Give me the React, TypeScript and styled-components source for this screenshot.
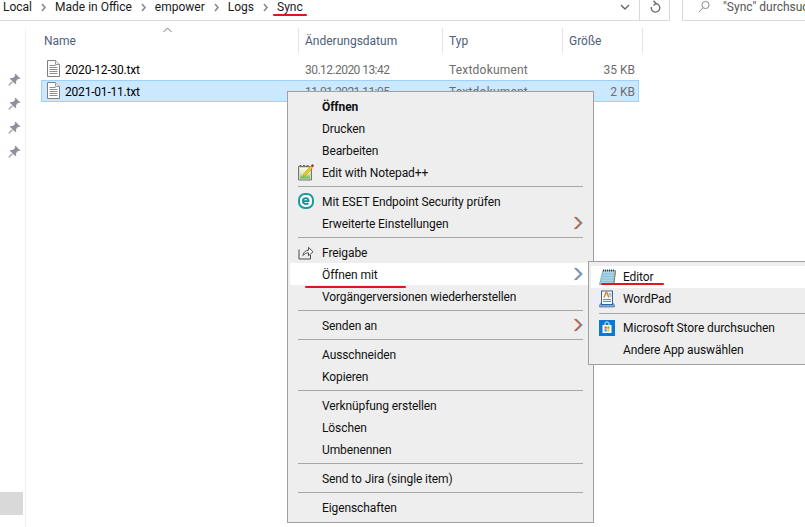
import React from "react";
import styled, { createGlobalStyle } from "styled-components";

const Global = createGlobalStyle`
  html, body { margin: 0; padding: 0; background: #fff; }
  body { font-family: Roboto, "Noto Sans", sans-serif; font-size: 12px; color: #000; }
  #root { width: 805px; height: 527px; }
`;

const Page = styled.div`
  position: relative;
  width: 805px;
  height: 527px;
  overflow: hidden;
  display: flex;
  flex-direction: column;
  background: #fff;
`;

const TopBar = styled.header`
  height: 21px;
  flex: none;
  display: flex;
  gap: 12px;
`;

const AddressBox = styled.div`
  width: 670px;
  flex: none;
  display: flex;
  align-items: flex-start;
  border-right: 1px solid #d9d9d9;
  border-bottom: 1px solid #d9d9d9;
  box-sizing: border-box;
  padding-left: 3px;
`;

const Crumbs = styled.div`
  display: flex;
  align-items: center;
  height: 14px;
`;

const Crumb = styled.span`
  position: relative;
  line-height: 14px;
  white-space: nowrap;
  color: #1a1a1a;
`;

const CrumbSep = styled.span`
  width: 23px;
  height: 14px;
  display: flex;
  align-items: center;
  justify-content: center;
`;

const AddressTools = styled.div`
  margin-left: auto;
  display: flex;
  height: 100%;
`;

const DropCell = styled.div`
  width: 29px;
  display: flex;
  justify-content: center;
  padding-top: 4px;
  box-sizing: border-box;
  border-right: 1px solid #d9d9d9;
`;

const RefreshCell = styled.div`
  width: 29px;
  display: flex;
  justify-content: center;
`;

const SearchBox = styled.div`
  flex: 1;
  min-width: 0;
  display: flex;
  align-items: flex-start;
  border-left: 1px solid #d9d9d9;
  border-bottom: 1px solid #d9d9d9;
  padding-left: 15px;
  gap: 13px;
  white-space: nowrap;
  color: #555;
  line-height: 14px;
  & > svg { flex: none; }
`;

const Body = styled.main`
  flex: 1;
  display: flex;
  min-height: 0;
  padding-top: 7px;
`;

const Side = styled.aside`
  width: 26px;
  flex: none;
  box-sizing: border-box;
  border-right: 1px solid #f1f1f1;
  display: flex;
  flex-direction: column;
  align-items: center;
  padding-top: 39px;
  padding-left: 4px;
`;

const PinSlot = styled.div`
  height: 24px;
  width: 16px;
  display: flex;
  align-items: center;
  justify-content: center;
`;

const ScrollThumb = styled.div`
  margin-top: auto;
  margin-bottom: 12px;
  margin-left: -4px;
  width: 23px;
  height: 23px;
  align-self: flex-start;
  background: #d9d9d9;
`;

const ListArea = styled.section`
  flex: 1;
  padding-left: 15px;
`;

const HeaderRow = styled.div`
  position: relative;
  display: grid;
  grid-template-columns: 258px 144px 120px 80px;
  height: 25px;
  margin-bottom: 5px;
`;

const HeaderCell = styled.div`
  display: flex;
  align-items: center;
  padding-left: 3px;
  border-right: 1px solid #e5e5e5;
  color: #4c607a;
  white-space: nowrap;
  & + & { padding-left: 6px; }
`;

const SortCaret = styled.span`
  position: absolute;
  left: 122px;
  top: -1px;
  line-height: 0;
`;

const FileRow = styled.div<{ $selected?: boolean }>`
  display: grid;
  grid-template-columns: 257px 144px 120px 72px;
  width: 598px;
  height: 22px;
  box-sizing: border-box;
  align-items: center;
  border: 1px solid ${(p) => (p.$selected ? "#99d1ff" : "transparent")};
  background: ${(p) => (p.$selected ? "#cce8ff" : "transparent")};
  white-space: nowrap;
`;

const NameCell = styled.div`
  display: flex;
  align-items: center;
  gap: 5px;
  padding-left: 5px;
  color: #000;
  letter-spacing: -0.2px;
`;

const IconWrap = styled.span`
  display: flex;
  margin-top: -2px;
`;

const MetaCell = styled.div<{ $right?: boolean; $spacing: number }>`
  color: #6d6d6d;
  padding-top: 2px;
  padding-left: ${(p) => (p.$right ? 0 : "6px")};
  text-align: ${(p) => (p.$right ? "right" : "left")};
  letter-spacing: ${(p) => p.$spacing}px;
`;

const FileName = styled.span`
  padding-top: 2px;
`;

const Menu = styled.div`
  position: absolute;
  left: 287px;
  top: 91px;
  width: 307px;
  box-sizing: border-box;
  border: 1px solid #a0a0a0;
  background: #eeeeee;
  padding: 3px 2px 4px;
`;

const SubMenu = styled(Menu)`
  left: 588px;
  top: 261px;
  width: 300px;
  padding: 4px 2px 3px;
`;

const Item = styled.div<{ $active?: boolean; $bold?: boolean }>`
  position: relative;
  height: 22px;
  display: flex;
  align-items: center;
  white-space: nowrap;
  background: ${(p) => (p.$active ? "#fff" : "transparent")};
  font-weight: ${(p) => (p.$bold ? 700 : 400)};
  color: #111;
`;

const Label = styled.span<{ $drop: number }>`
  padding-top: ${(p) => p.$drop}px;
  letter-spacing: -0.1px;
`;

const IconSlot = styled.span`
  width: 32px;
  height: 22px;
  flex: none;
  display: flex;
  align-items: center;
  justify-content: center;
`;

const Arrow = styled.span`
  margin-left: auto;
  margin-right: 8px;
  line-height: 0;
`;

const Divider = styled.div<{ $indent: number; $right: number }>`
  height: 1px;
  margin: 3px ${(p) => p.$right}px 3px ${(p) => p.$indent}px;
  background: #a6a6a6;
`;

const RedMark = styled.span<{ $left: number; $top: number; $w: number }>`
  position: absolute;
  left: ${(p) => p.$left}px;
  top: ${(p) => p.$top}px;
  width: ${(p) => p.$w}px;
  height: 2px;
  border-radius: 1px;
  background: #e3141c;
`;

const Chev = () => (
  <svg width="7" height="9" viewBox="0 0 7 9">
    <path d="M2 1l3 3.500L2 8" fill="none" stroke="#8a8a8a" strokeWidth="1.600" />
  </svg>
);

const Pin = () => (
  <svg width="13" height="13" viewBox="0 0 12 12">
    <path d="M7 0.600L11.400 5 10.400 5.800 9.200 5.400 7.400 7.600 7.600 9.600 6.600 10.200 1.800 5.400 2.400 4.600 4.400 4.600 6.600 2.800 6.200 1.400z" fill="#8b9299" />
    <path d="M4 8L0.600 11.400" stroke="#9aa0a6" strokeWidth="1.200" />
  </svg>
);

const TxtIcon = () => (
  <svg width="13" height="17" viewBox="0 0 13 17">
    <path d="M.5.500h8l4 4v12h-12z" fill="#fff" stroke="#7f7f7f" />
    <path d="M8.500.500v4h4" fill="#eee" stroke="#9a9a9a" />
    <path d="M2.500 5.500h6M2.500 7.500h8M2.500 9.500h8M2.500 11.500h8M2.500 13.500h8" stroke="#8f8f8f" />
  </svg>
);

const MenuArrow = ({ dark }: { dark?: boolean }) => (
  <svg width="9" height="14" viewBox="0 0 9 14">
    <path d="M0.500 1l6 6-6 6" fill="none" stroke={dark ? "#b09a8c" : "#e8641c"} strokeWidth="1.100" />
    <path d="M2.300 1l6 6-6 6" fill="none" stroke="#2f8fe0" strokeWidth=".9" />
    <path d="M1.400 1l6 6-6 6" fill="none" stroke={dark ? "#2c4a80" : "#6a2c2c"} strokeWidth=".6" />
  </svg>
);

const NotepadPP = () => (
  <svg width="17" height="18" viewBox="0 0 17 18">
    <defs>
      <linearGradient id="nppPaper" x1="0" y1="0" x2="0" y2="1">
        <stop offset="0" stopColor="#fbfbf2" />
        <stop offset=".55" stopColor="#dcebb8" />
        <stop offset="1" stopColor="#5fb548" />
      </linearGradient>
    </defs>
    <path d="M0.500 3.500h13v13.500h-13z" fill="#d8d8d0" stroke="#77776d" />
    <path d="M2 5h10v10.500h-10z" fill="url(#nppPaper)" />
    <path d="M1.500 2.500h2M5 2.500h2M8.500 2.500h2" stroke="#6d6d62" />
    <path d="M5 14l1-3.500 6.500-7.500 2 1.700-6.500 7.500z" fill="#f0c81e" stroke="#a08a1e" strokeWidth=".5" />
    <path d="M13 2.600l1.300-1.500 1.800 1.600-1.300 1.600z" fill="#9e2a2e" />
  </svg>
);

const Eset = () => (
  <svg width="16" height="16" viewBox="0 0 16 16">
    <rect x="1" y="1" width="14" height="14" rx="6" fill="#fff" stroke="#1a9aa3" strokeWidth="2" />
    <path d="M5 8.200h5.600c0-2-1.100-3-2.700-3-1.800 0-3 1.200-3 2.900s1.200 2.900 3 2.900c1.100 0 1.900-.3 2.500-.8" fill="none" stroke="#1a8f98" strokeWidth="1.800" />
  </svg>
);

const ShareIcon = () => (
  <svg width="16" height="15" viewBox="0 0 16 15">
    <path d="M1 4.500v9.500h11.500v-4" fill="none" stroke="#4a4a4a" />
    <path d="M5 10.500c.3-3.500 2.800-5.200 5.500-5.200v-3l4.500 4.500-4.500 4v-3c-2.200 0-4 .8-5.500 2.700z" fill="#fff" stroke="#4a4a4a" />
  </svg>
);

const NotepadIcon = () => (
  <svg width="17" height="18" viewBox="0 0 17 18">
    <path d="M4 2.500h12.500l-2 14h-14z" fill="#a9d6e8" stroke="#5f9fc0" strokeWidth=".8" />
    <path d="M3.500 6h12M3 8.500h12M2.600 11h12M2.200 13.500h12" stroke="#7fbbd6" strokeWidth=".8" />
    <path d="M4.500 1.500v2M6.500 1.500v2M8.500 1.500v2M10.500 1.500v2M12.500 1.500v2M14.500 1.500v2" stroke="#3b3b3b" />
    <path d="M16.500 3l-1.800 14" stroke="#9b7b3f" />
  </svg>
);

const WordPadIcon = () => (
  <svg width="16" height="18" viewBox="0 0 16 18">
    <path d="M0.500 15.500l1-2h13l1 2v1.500h-15z" fill="#7ea6d6" stroke="#35649c" strokeWidth=".6" />
    <rect x="2.500" y="1" width="11" height="13.500" fill="#f5f8fc" stroke="#35649c" />
    <path d="M5 7.500l2-5h.8l2 5" fill="none" stroke="#e87a1d" strokeWidth="1.300" />
    <path d="M4 9.500h8M4 11.500h8M9.500 4h3M10.500 6h2" stroke="#5e8ac0" />
  </svg>
);

const StoreIcon = () => (
  <svg width="16" height="16" viewBox="0 0 16 16">
    <rect width="16" height="16" fill="#0a78d4" />
    <path d="M3.500 5h9v8h-9z" fill="#fff" />
    <path d="M6 5V3.500C6 2.600 6.800 2 8 2s2 .6 2 1.500V5" fill="none" stroke="#fff" />
    <rect x="5.500" y="6.500" width="2.200" height="2.200" fill="#f25022" />
    <rect x="8.300" y="6.500" width="2.200" height="2.200" fill="#7fba00" />
    <rect x="5.500" y="9.300" width="2.200" height="2.200" fill="#00a4ef" />
    <rect x="8.300" y="9.300" width="2.200" height="2.200" fill="#ffb900" />
  </svg>
);

const crumbs = ["Local", "Made in Office", "empower", "Logs"];

const mainItems = [
  [{ t: "Öffnen", bold: true }, { t: "Drucken" }, { t: "Bearbeiten" }, { t: "Edit with Notepad++", icon: <NotepadPP /> }],
  [{ t: "Mit ESET Endpoint Security prüfen", icon: <Eset /> }, { t: "Erweiterte Einstellungen", arrow: true }],
  [
    { t: "Freigabe", icon: <ShareIcon /> },
    { t: "Öffnen mit", active: true, arrow: true, dark: true, mark: true },
    { t: "Vorgängerversionen wiederherstellen" },
  ],
  [{ t: "Senden an", arrow: true }],
  [{ t: "Ausschneiden" }, { t: "Kopieren" }],
  [{ t: "Verknüpfung erstellen" }, { t: "Löschen" }, { t: "Umbenennen" }],
  [{ t: "Send to Jira (single item)" }],
  [{ t: "Eigenschaften" }],
] as { t: string; bold?: boolean; icon?: React.ReactNode; arrow?: boolean; active?: boolean; dark?: boolean; mark?: boolean }[][];

const subItems = [
  [
    { t: "Editor", icon: <NotepadIcon />, active: true },
    { t: "WordPad", icon: <WordPadIcon /> },
  ],
  [{ t: "Microsoft Store durchsuchen", icon: <StoreIcon /> }, { t: "Andere App auswählen" }],
];

const files = [
  { name: "2020-12-30.txt", date: "30.12.2020 13:42", size: "35 KB" },
  { name: "2021-01-11.txt", date: "11.01.2021 11:05", size: "2 KB", selected: true },
];

export default function App() {
  return (
    <Page>
      <Global />
      <TopBar>
        <AddressBox>
          <Crumbs>
            {crumbs.map((c) => (
              <React.Fragment key={c}>
                <Crumb>{c}</Crumb>
                <CrumbSep><Chev /></CrumbSep>
              </React.Fragment>
            ))}
            <Crumb>
              Sync
              <RedMark $left={-4} $top={14} $w={34} />
            </Crumb>
          </Crumbs>
          <AddressTools>
            <DropCell>
              <svg width="10" height="6" viewBox="0 0 10 6"><path d="M1 1l4 4 4-4" fill="none" stroke="#666" strokeWidth="1.400" /></svg>
            </DropCell>
            <RefreshCell>
              <svg width="12" height="14" viewBox="0 0 12 14"><path d="M6.500 3.500a4.300 4.300 0 1 1-4.200 3.500M4.500 0.800l2.500 2.700-2.500 2" fill="none" stroke="#666" strokeWidth="1.300" /></svg>
            </RefreshCell>
          </AddressTools>
        </AddressBox>
        <SearchBox>
          <svg width="12" height="13" viewBox="0 0 12 13"><circle cx="7.500" cy="5" r="3.600" fill="none" stroke="#8a8a8a" /><path d="M5 7.800L1 12" stroke="#8a8a8a" /></svg>
          <span>"Sync" durchsuchen</span>
        </SearchBox>
      </TopBar>
      <Body>
        <Side>
          {[0, 1, 2, 3].map((i) => (
            <PinSlot key={i}><Pin /></PinSlot>
          ))}
          <ScrollThumb />
        </Side>
        <ListArea>
          <HeaderRow>
            <SortCaret>
              <svg width="9" height="6" viewBox="0 0 9 6"><path d="M0.500 5l4-4 4 4" fill="none" stroke="#777" /></svg>
            </SortCaret>
            <HeaderCell>Name</HeaderCell>
            <HeaderCell>Änderungsdatum</HeaderCell>
            <HeaderCell>Typ</HeaderCell>
            <HeaderCell>Größe</HeaderCell>
          </HeaderRow>
          {files.map((f) => (
            <FileRow key={f.name} $selected={f.selected}>
              <NameCell>
                <IconWrap><TxtIcon /></IconWrap>
                <FileName>{f.name}</FileName>
              </NameCell>
              <MetaCell $spacing={-0.55}>{f.date}</MetaCell>
              <MetaCell $spacing={0.2}>Textdokument</MetaCell>
              <MetaCell $right $spacing={0}>{f.size}</MetaCell>
            </FileRow>
          ))}
        </ListArea>
      </Body>
      <Menu>
        {mainItems.map((group, g) => (
          <React.Fragment key={g}>
            {g > 0 && <Divider $indent={8} $right={8} />}
            {group.map((it) => (
              <Item key={it.t} $active={it.active} $bold={it.bold}>
                <IconSlot>{it.icon}</IconSlot>
                <Label $drop={2}>{it.t}</Label>
                {it.arrow && <Arrow><MenuArrow dark={it.dark} /></Arrow>}
                {it.mark && <RedMark $left={15} $top={23} $w={101} />}
              </Item>
            ))}
          </React.Fragment>
        ))}
      </Menu>
      <SubMenu>
        {subItems.map((group, g) => (
          <React.Fragment key={g}>
            {g > 0 && <Divider $indent={8} $right={0} />}
            {group.map((it) => (
              <Item key={it.t} $active={it.active}>
                <IconSlot>{it.icon}</IconSlot>
                <Label $drop={0}>{it.t}</Label>
                {it.active && <RedMark $left={10} $top={17} $w={63} />}
              </Item>
            ))}
          </React.Fragment>
        ))}
      </SubMenu>
    </Page>
  );
}
